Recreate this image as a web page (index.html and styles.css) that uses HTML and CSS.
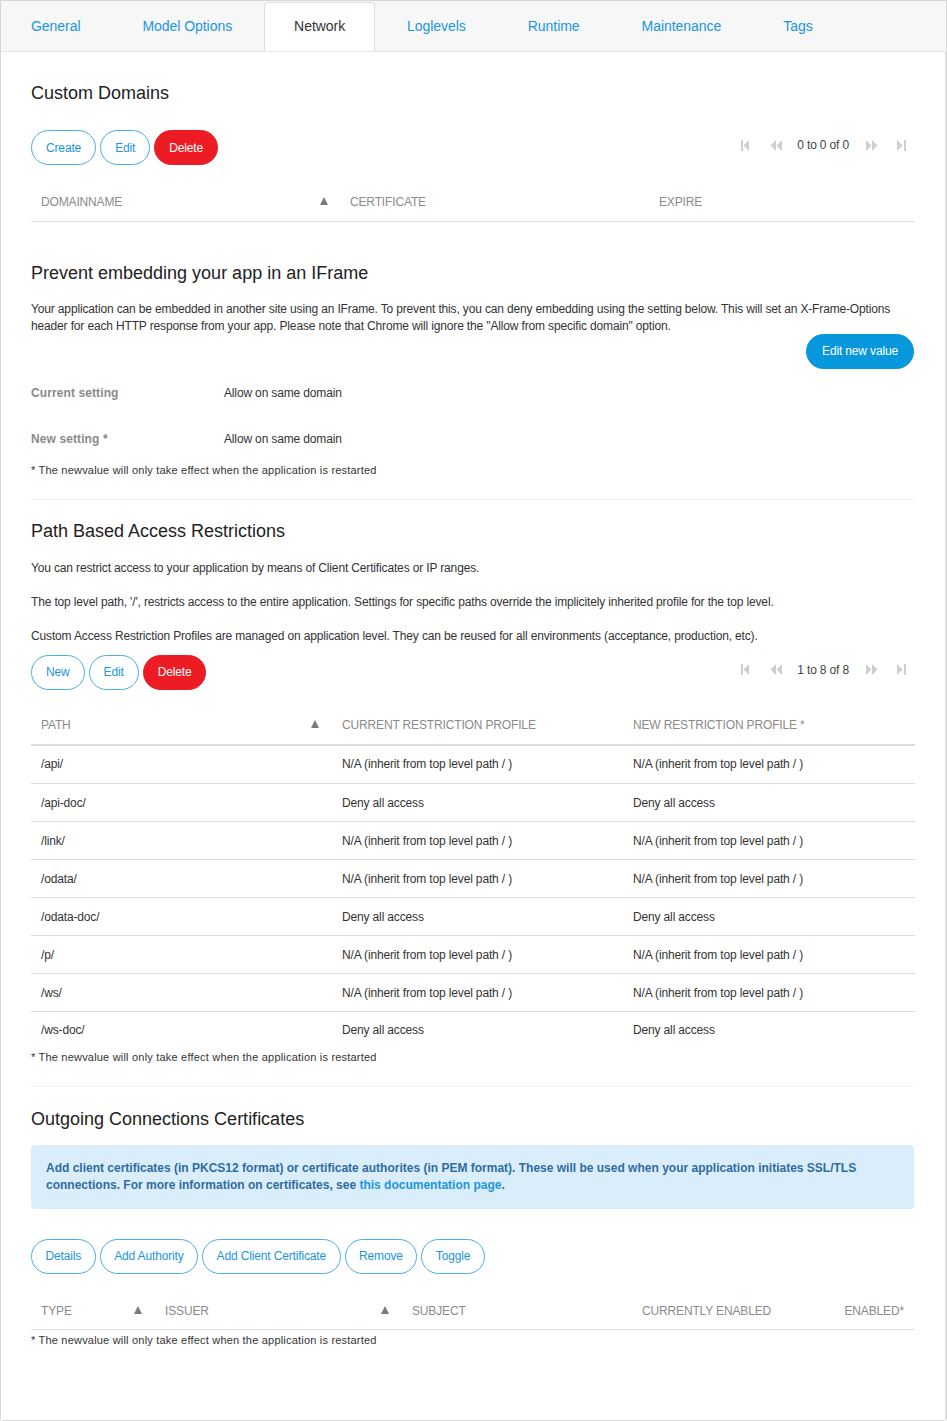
FILE: index.html
```html
<!DOCTYPE html>
<html lang="en">
<head>
<meta charset="utf-8">
<title>Network</title>
<link rel="stylesheet" href="styles.css">
</head>
<body>
<div class="app">
  <nav class="tabs">
    <a class="tab">General</a>
    <a class="tab">Model Options</a>
    <a class="tab active">Network</a>
    <a class="tab">Loglevels</a>
    <a class="tab">Runtime</a>
    <a class="tab">Maintenance</a>
    <a class="tab">Tags</a>
  </nav>
  <main class="panel">

    <section class="section first">
      <h2 class="heading">Custom Domains</h2>
      <div class="toolbar">
        <button class="btn">Create</button>
        <button class="btn">Edit</button>
        <button class="btn danger">Delete</button>
        <div class="pager">
          <span class="pg pg-first"><svg width="8" height="11" viewBox="0 0 8 11"><rect x="0" y="0" width="2" height="11"/><path d="M8 0 L2.5 5.5 L8 11 Z"/></svg></span>
          <span class="pg pg-prev"><svg width="12" height="11" viewBox="0 0 12 11"><path d="M6 0 L0.5 5.5 L6 11 Z M12 0 L6.5 5.5 L12 11 Z"/></svg></span>
          <span class="pg-text">0 to 0 of 0</span>
          <span class="pg pg-next"><svg width="12" height="11" viewBox="0 0 12 11"><path d="M0 0 L5.5 5.5 L0 11 Z M6 0 L11.5 5.5 L6 11 Z"/></svg></span>
          <span class="pg pg-last"><svg width="9" height="11" viewBox="0 0 9 11"><path d="M0 0 L5.5 5.5 L0 11 Z"/><rect x="7" y="0" width="2" height="11"/></svg></span>
        </div>
      </div>
      <table class="grid grid-domains">
        <colgroup><col class="c35"><col class="c35"><col></colgroup>
        <thead>
          <tr><th><span>Domainname</span><i class="sort"></i></th><th>Certificate</th><th>Expire</th></tr>
        </thead>
      </table>
    </section>

    <section class="section">
      <h2 class="heading">Prevent embedding your app in an IFrame</h2>
      <p class="text">Your application can be embedded in another site using an IFrame. To prevent this, you can deny embedding using the setting below. This will set an X-Frame-Options header for each HTTP response from your app. Please note that Chrome will ignore the "Allow from specific domain" option.</p>
      <div class="right-actions"><button class="btn primary">Edit new value</button></div>
      <dl class="settings">
        <div class="setting"><dt>Current setting</dt><dd>Allow on same domain</dd></div>
        <div class="setting"><dt>New setting *</dt><dd>Allow on same domain</dd></div>
      </dl>
      <p class="note">* The newvalue will only take effect when the application is restarted</p>
    </section>

    <section class="section divided">
      <h2 class="heading">Path Based Access Restrictions</h2>
      <p class="text lead">You can restrict access to your application by means of Client Certificates or IP ranges.</p>
      <p class="text">The top level path, '/', restricts access to the entire application. Settings for specific paths override the implicitely inherited profile for the top level.</p>
      <p class="text">Custom Access Restriction Profiles are managed on application level. They can be reused for all environments (acceptance, production, etc).</p>
      <div class="toolbar tb-paths">
        <button class="btn">New</button>
        <button class="btn">Edit</button>
        <button class="btn danger">Delete</button>
        <div class="pager">
          <span class="pg pg-first"><svg width="8" height="11" viewBox="0 0 8 11"><rect x="0" y="0" width="2" height="11"/><path d="M8 0 L2.5 5.5 L8 11 Z"/></svg></span>
          <span class="pg pg-prev"><svg width="12" height="11" viewBox="0 0 12 11"><path d="M6 0 L0.5 5.5 L6 11 Z M12 0 L6.5 5.5 L12 11 Z"/></svg></span>
          <span class="pg-text">1 to 8 of 8</span>
          <span class="pg pg-next"><svg width="12" height="11" viewBox="0 0 12 11"><path d="M0 0 L5.5 5.5 L0 11 Z M6 0 L11.5 5.5 L6 11 Z"/></svg></span>
          <span class="pg pg-last"><svg width="9" height="11" viewBox="0 0 9 11"><path d="M0 0 L5.5 5.5 L0 11 Z"/><rect x="7" y="0" width="2" height="11"/></svg></span>
        </div>
      </div>
      <table class="grid grid-paths">
        <colgroup><col class="p1"><col class="p2"><col></colgroup>
        <thead>
          <tr><th><span>Path</span><i class="sort"></i></th><th>Current restriction profile</th><th>New restriction profile *</th></tr>
        </thead>
        <tbody>
          <tr><td>/api/</td><td>N/A (inherit from top level path / )</td><td>N/A (inherit from top level path / )</td></tr>
          <tr><td>/api-doc/</td><td>Deny all access</td><td>Deny all access</td></tr>
          <tr><td>/link/</td><td>N/A (inherit from top level path / )</td><td>N/A (inherit from top level path / )</td></tr>
          <tr><td>/odata/</td><td>N/A (inherit from top level path / )</td><td>N/A (inherit from top level path / )</td></tr>
          <tr><td>/odata-doc/</td><td>Deny all access</td><td>Deny all access</td></tr>
          <tr><td>/p/</td><td>N/A (inherit from top level path / )</td><td>N/A (inherit from top level path / )</td></tr>
          <tr><td>/ws/</td><td>N/A (inherit from top level path / )</td><td>N/A (inherit from top level path / )</td></tr>
          <tr><td>/ws-doc/</td><td>Deny all access</td><td>Deny all access</td></tr>
        </tbody>
      </table>
      <p class="note after-table">* The newvalue will only take effect when the application is restarted</p>
    </section>

    <section class="section divided last">
      <h2 class="heading">Outgoing Connections Certificates</h2>
      <div class="info">Add client certificates (in PKCS12 format) or certificate authorites (in PEM format). These will be used when your application initiates SSL/TLS connections. For more information on certificates, see <a class="link">this documentation page</a>.</div>
      <div class="toolbar tb-certs">
        <button class="btn">Details</button>
        <button class="btn">Add Authority</button>
        <button class="btn">Add Client Certificate</button>
        <button class="btn">Remove</button>
        <button class="btn">Toggle</button>
      </div>
      <table class="grid grid-certs">
        <colgroup><col class="k1"><col class="k2"><col class="k3"><col class="k4"><col></colgroup>
        <thead>
          <tr><th><span>Type</span><i class="sort"></i></th><th><span>Issuer</span><i class="sort"></i></th><th>Subject</th><th>Currently enabled</th><th class="ralign">Enabled*</th></tr>
        </thead>
      </table>
      <p class="note tight">* The newvalue will only take effect when the application is restarted</p>
    </section>

  </main>
</div>
</body>
</html>
```
FILE: styles.css
```css
* { box-sizing: border-box; }
html, body { margin: 0; padding: 0; background: #ffffff; }
body { font-family: "Liberation Sans", Arial, sans-serif; color: #333; }

.app {
  width: 947px;
  height: 1421px;
  border: 1px solid #d6d6d6;
  border-radius: 0 0 3px 3px;
  background: #f7f7f7;
  display: flex;
  flex-direction: column;
}

.tabs {
  display: flex;
  gap: 2px;
  padding-top: 1px;
  height: 50px;
  position: relative;
  z-index: 1;
}
.tab {
  display: block;
  height: 49px;
  line-height: 46px;
  padding: 0 29px;
  border: 1px solid transparent;
  border-bottom: none;
  border-radius: 4px 4px 0 0;
  font-size: 14px;
  letter-spacing: -0.05px;
  color: #1a96df;
  cursor: pointer;
}
.tab.active {
  background: #fff;
  border-color: #dedede;
  color: #333;
}

.panel {
  flex: 1;
  background: #fff;
  border-top: 1px solid #e6e6e6;
  border-right: 1px solid #e0e0e0;
  border-radius: 0 4px 0 0;
  padding: 30px 31px 0 30px;
}

.section + .section { margin-top: 40px; }
.section.divided { border-top: 1px solid #efefef; padding-top: 20px; margin-top: 22px; }
.section.divided.last { padding-top: 21px; }

.heading {
  margin: 0;
  font-size: 18px;
  line-height: 22px;
  font-weight: normal;
  color: #222;
}

.toolbar {
  display: flex;
  align-items: center;
  gap: 4px;
  margin-top: 26px;
}
.tb-paths { margin-top: 10px; }
.tb-certs { margin-top: 30px; }

.btn {
  height: 35px;
  padding: 0 14px;
  border: 1px solid #4aaeea;
  border-radius: 18px;
  background: #fff;
  color: #1a96df;
  font-family: inherit;
  font-size: 12px;
  letter-spacing: -0.15px;
  cursor: pointer;
}
.tb-certs .btn { padding: 0 13.5px; }
.btn.danger { background: #ed1c24; border-color: #ed1c24; color: #fff; }
.btn.primary { background: #0797dc; border-color: #0797dc; color: #fff; padding: 0 15px; }

.pager {
  margin-left: auto;
  display: flex;
  align-items: center;
  font-size: 12px;
  letter-spacing: -0.15px;
  color: #444;
  padding-right: 8px;
  padding-bottom: 5px;
}
.pg { display: inline-flex; fill: #cfcfcf; }
.pg-prev { margin-left: 21px; }
.pg-text { margin-left: 15px; }
.pg-next { margin-left: 17px; }
.pg-last { margin-left: 19px; }

.grid {
  width: 100%;
  border-collapse: collapse;
  table-layout: fixed;
  font-size: 12px;
  letter-spacing: -0.15px;
}
.grid th {
  text-align: left;
  font-weight: normal;
  text-transform: uppercase;
  color: #8a8a8a;
  padding: 0 10px;
  height: 37px;
  border-bottom: 1px solid #dcdcdc;
  white-space: nowrap;
}
.grid th span { display: inline-block; }
.grid th .sort {
  float: right;
  width: 0; height: 0;
  margin-top: 2px;
  margin-right: 2px;
  border-left: 4.5px solid transparent;
  border-right: 4.5px solid transparent;
  border-bottom: 8px solid #7a7a7a;
}
.grid th.ralign { text-align: right; }
.grid-domains { margin-top: 18px; }
.grid-domains col.c35 { width: 309px; }
.grid-domains th { height: 38px; }

.grid-paths { margin-top: 17px; width: 884px; }
.grid-paths col.p1 { width: 301px; }
.grid-paths col.p2 { width: 291px; }
.grid-paths th { height: 38px; border-bottom: 2px solid #dcdcdc; }
.grid-paths th .sort { margin-right: 3px; }
.grid-paths td {
  height: 38px;
  padding: 0 10px;
  color: #333;
  border-bottom: 1px solid #dedede;
}
.grid-paths tbody tr:first-child td { height: 39px; }
.grid-paths tbody tr:last-child td { border-bottom: none; height: 37px; }

.grid-certs { margin-top: 19px; }
.grid-certs col.k1 { width: 124px; }
.grid-certs col.k2 { width: 247px; }
.grid-certs col.k3 { width: 230px; }
.grid-certs col.k4 { width: 180px; }
.grid-certs th .sort { margin-right: 3px; }

.text {
  margin: 17px 0 0;
  font-size: 12px;
  line-height: 17px;
  letter-spacing: -0.15px;
  color: #333;
}
.text.lead { margin-top: 18px; }

.right-actions { display: flex; justify-content: flex-end; margin-top: -1px; }

.settings { margin: 16px 0 0; }
.setting { display: flex; font-size: 12px; line-height: 17px; }
.setting + .setting { margin-top: 29px; }
.setting dt { width: 193px; font-weight: bold; color: #8a8a8a; letter-spacing: 0.1px; }
.setting dd { margin: 0; color: #333; letter-spacing: -0.15px; }

.note {
  margin: 15px 0 0;
  font-size: 11px;
  line-height: 14px;
  color: #333;
  letter-spacing: 0.2px;
}
.note.after-table { margin-top: 1px; }
.note.tight { margin-top: 3px; }

.info {
  margin-top: 15px;
  background: #daedfb;
  border-radius: 4px;
  padding: 15px 40px 15px 15px;
  min-height: 64px;
  font-size: 12px;
  line-height: 17px;
  font-weight: bold;
  color: #2f6c9f;
}
.link { color: #1a96df; cursor: pointer; }
```
